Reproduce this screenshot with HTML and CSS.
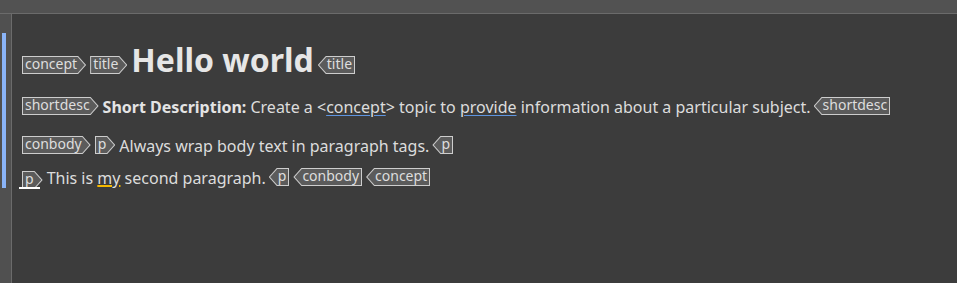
FILE: index.html
```html
<!DOCTYPE html>
<html>
<head>
<meta charset="utf-8">
<link rel="stylesheet" href="styles.css">
</head>
<body>
<div class="topbar"></div>
<div class="main">
  <div class="gutter"><div class="change-bar"></div></div>
  <div class="editor">
    <div class="row row-title">
      <span class="tag open"><span class="tag-in">concept</span></span>
      <span class="tag open"><span class="tag-in">title</span></span>
      <h1 class="heading">Hello world</h1>
      <span class="tag close"><span class="tag-in">title</span></span>
    </div>
    <div class="row row-short">
      <span class="tag open"><span class="tag-in">shortdesc</span></span>
      <span class="text"><b>Short Description:</b> Create a &lt;<span class="link">concept</span>&gt; topic to <span class="link">provide</span> information about a particular subject.</span>
      <span class="tag close"><span class="tag-in">shortdesc</span></span>
    </div>
    <div class="row row-body">
      <span class="tag open"><span class="tag-in">conbody</span></span>
      <span class="tag open"><span class="tag-in">p</span></span>
      <span class="text">Always wrap body text in paragraph tags.</span>
      <span class="tag close"><span class="tag-in">p</span></span>
    </div>
    <div class="row row-last">
      <span class="caret-wrap"><span class="tag open"><span class="tag-in">p</span></span></span>
      <span class="text">This is <span class="spell">my</span> second paragraph.</span>
      <span class="tag close"><span class="tag-in">p</span></span>
      <span class="tag close"><span class="tag-in">conbody</span></span>
      <span class="tag close"><span class="tag-in">concept</span></span>
    </div>
  </div>
</div>
</body>
</html>
```

FILE: styles.css
```css
html, body {
  margin: 0;
  padding: 0;
  height: 100%;
}
body {
  background: #3c3c3c;
  font-family: "Noto Sans", "DejaVu Sans", sans-serif;
  color: #dcdcdc;
  overflow: hidden;
}
.topbar {
  height: 13px;
  background: #525252;
  border-bottom: 1px solid #6b6b6b;
}
.main {
  display: flex;
  height: calc(100% - 14px);
}
.gutter {
  width: 11px;
  background: #505050;
  border-right: 1px solid #6b6b6b;
  flex: none;
}
.change-bar {
  margin: 19px 0 0 2px;
  width: 4px;
  height: 155px;
  background: #8ab4f8;
}
.editor {
  flex: 1;
  padding: 30px 0 0 10px;
}
.row {
  display: flex;
  align-items: flex-start;
  font-size: 16px;
  line-height: 20px;
  height: 20px;
  white-space: nowrap;
}
.row-title {
  height: 32px;
}
.row-title .tag {
  margin-top: 12px;
}
.row-short {
  margin-top: 21px;
}
.row-body {
  margin-top: 19px;
}
.row-last {
  margin-top: 12px;
}
.heading {
  margin: 0 4px 0 0;
  font-size: 32px;
  line-height: 32px;
  font-weight: 700;
  color: #e6e6e6;
}
.text {
  margin: 0 3px 0 0;
}
.text b {
  font-weight: 700;
  color: #e4e4e4;
}
.link {
  text-decoration: underline;
  text-decoration-color: #5f95e0;
  text-decoration-thickness: 1px;
  text-underline-offset: 2px;
}
.spell {
  text-decoration: underline;
  text-decoration-color: #f5b800;
  text-decoration-thickness: 2px;
  text-underline-offset: 1px;
}
.tag {
  display: inline-block;
  flex: none;
  height: 18px;
  box-sizing: border-box;
  padding: 1px;
  background: #cdcdcd;
  margin-right: 4px;
}
.tag-in {
  display: block;
  height: 16px;
  font-size: 14px;
  line-height: 14px;
  color: #dedede;
  background: #5b5b5b;
}
.tag.open {
  clip-path: polygon(0 0, calc(100% - 8px) 0, 100% 50%, calc(100% - 8px) 100%, 0 100%);
}
.tag.open .tag-in {
  padding: 0 8px 0 2px;
  clip-path: polygon(0 0, calc(100% - 7.45px) 0, calc(100% - 0.34px) 50%, calc(100% - 7.45px) 100%, 0 100%);
}
.tag.close {
  clip-path: polygon(8px 0, 100% 0, 100% 100%, 8px 100%, 0 50%);
}
.tag.close .tag-in {
  padding: 0 2px 0 8px;
  clip-path: polygon(7.45px 0, 100% 0, 100% 100%, 7.45px 100%, 0.34px 50%);
}
.caret-wrap {
  position: relative;
  display: inline-block;
  flex: none;
}
.caret-wrap::after {
  content: "";
  position: absolute;
  left: -3px;
  top: 19px;
  width: 21px;
  height: 2px;
  background: #ffffff;
}
```
